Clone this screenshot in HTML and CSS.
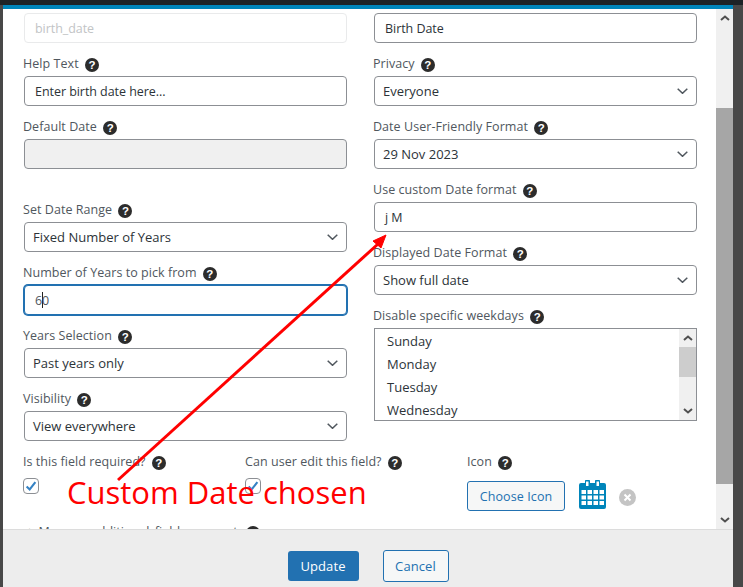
FILE: index.html
```html
<!DOCTYPE html>
<html lang="en">
<head>
<meta charset="utf-8">
<title>Edit field</title>
<link rel="stylesheet" href="styles.css">
</head>
<body>
<div class="topbar"></div>
<div class="stage">
  <div class="modal">
    <div class="modal-strip"></div>
    <div class="modal-body">
      <div class="scroll-content">
        <div class="columns">
          <div class="col">
            <div class="field">
              <div class="control disabled-light">birth_date</div>
            </div>
            <div class="field">
              <div class="label">Help Text <span class="help">?</span></div>
              <div class="control">Enter birth date here...</div>
            </div>
            <div class="field field-gap">
              <div class="label">Default Date <span class="help">?</span></div>
              <div class="control disabled"></div>
            </div>
            <div class="field">
              <div class="label">Set Date Range <span class="help">?</span></div>
              <div class="control select">Fixed Number of Years<svg class="chev" viewBox="0 0 11 6"><path d="M.7.7 5.500 5.300 10.300.7"/></svg></div>
            </div>
            <div class="field">
              <div class="label">Number of Years to pick from <span class="help">?</span></div>
              <div class="control focused">6<span class="caret"></span>0</div>
            </div>
            <div class="field">
              <div class="label">Years Selection <span class="help">?</span></div>
              <div class="control select">Past years only<svg class="chev" viewBox="0 0 11 6"><path d="M.7.7 5.500 5.300 10.300.7"/></svg></div>
            </div>
            <div class="field">
              <div class="label">Visibility <span class="help">?</span></div>
              <div class="control select">View everywhere<svg class="chev" viewBox="0 0 11 6"><path d="M.7.7 5.500 5.300 10.300.7"/></svg></div>
            </div>
          </div>
          <div class="col">
            <div class="field">
              <div class="control">Birth Date</div>
            </div>
            <div class="field">
              <div class="label">Privacy <span class="help">?</span></div>
              <div class="control select">Everyone<svg class="chev" viewBox="0 0 11 6"><path d="M.7.7 5.500 5.300 10.300.7"/></svg></div>
            </div>
            <div class="field">
              <div class="label">Date User-Friendly Format <span class="help">?</span></div>
              <div class="control select">29 Nov 2023<svg class="chev" viewBox="0 0 11 6"><path d="M.7.7 5.500 5.300 10.300.7"/></svg></div>
            </div>
            <div class="field">
              <div class="label">Use custom Date format <span class="help">?</span></div>
              <div class="control">j M</div>
            </div>
            <div class="field">
              <div class="label">Displayed Date Format <span class="help">?</span></div>
              <div class="control select">Show full date<svg class="chev" viewBox="0 0 11 6"><path d="M.7.7 5.500 5.300 10.300.7"/></svg></div>
            </div>
            <div class="field">
              <div class="label">Disable specific weekdays <span class="help">?</span></div>
              <div class="listbox">
                <div class="options">
                  <div class="option">Sunday</div>
                  <div class="option">Monday</div>
                  <div class="option">Tuesday</div>
                  <div class="option">Wednesday</div>
                </div>
                <div class="mini-scroll">
                  <svg class="arrow" viewBox="0 0 10 6"><path d="M1 5 5 1.500 9 5"/></svg>
                  <div class="mini-thumb"></div>
                  <svg class="arrow arrow-end" viewBox="0 0 10 6"><path d="M1 1 5 4.500 9 1"/></svg>
                </div>
              </div>
            </div>
          </div>
        </div>
        <div class="options-row">
          <div class="opt opt-required">
            <div class="label">Is this field required? <span class="help">?</span></div>
            <span class="check"><svg viewBox="0 0 16 16"><path d="M3 8.500 6.500 12 13 3.500"/></svg></span>
          </div>
          <div class="opt opt-edit">
            <div class="label">Can user edit this field? <span class="help">?</span></div>
            <span class="check"><svg viewBox="0 0 16 16"><path d="M3 8.500 6.500 12 13 3.500"/></svg></span>
          </div>
          <div class="opt">
            <div class="label">Icon <span class="help">?</span></div>
            <div class="icon-row">
              <div class="btn btn-sec btn-icon">Choose Icon</div>
              <svg class="cal" viewBox="0 0 27 29">
                <path fill="#0085ba" d="M2 3h4V1.500a2.500 2.500 0 0 1 5 0V3h5V1.500a2.500 2.500 0 0 1 5 0V3h4a2 2 0 0 1 2 2v22a2 2 0 0 1-2 2H2a2 2 0 0 1-2-2V5a2 2 0 0 1 2-2z"/>
                <path fill="#fff" d="M7 1.500h2.500V6H7zM17.500 1.500H20V6h-2.500zM2.500 10h4.500v4H2.500zM8.500 10h4.500v4H8.500zM14.500 10H19v4h-4.500zM20.500 10H25v4h-4.500zM2.500 15.500h4.500v4H2.500zM8.500 15.500h4.500v4H8.500zM14.500 15.500H19v4h-4.500zM20.500 15.500H25v4h-4.500zM2.500 21h4.500v4H2.500zM8.500 21h4.500v4H8.500zM14.500 21H19v4h-4.500zM20.500 21H25v4h-4.500z"/>
              </svg>
              <svg class="clear" viewBox="0 0 17 17"><circle cx="8.500" cy="8.500" r="8.500" fill="#c4c4c4"/><path d="M5.500 5.500l6 6m0-6-6 6" stroke="#fff" stroke-width="2" fill="none"/></svg>
            </div>
          </div>
        </div>
        <div class="label label-more">+ Manage additional fields support <span class="help">?</span></div>
      </div>
      <div class="scrollbar">
        <svg class="arrow" viewBox="0 0 10 6"><path d="M1 5 5 1.500 9 5"/></svg>
        <div class="thumb"></div>
        <svg class="arrow arrow-end" viewBox="0 0 10 6"><path d="M1 1 5 4.500 9 1"/></svg>
      </div>
    </div>
    <div class="modal-footer">
      <div class="btn btn-primary">Update</div>
      <div class="btn btn-sec btn-cancel">Cancel</div>
    </div>
  </div>
</div>
<svg class="annotation" viewBox="0 0 743 587">
  <path d="M118 480 378 244" stroke="#ff0000" stroke-width="3" fill="none"/>
  <path d="M386 235 373 241 381 248z" fill="#ff0000" stroke="#ff0000" stroke-width="1"/>
</svg>
<div class="annotation-text">Custom Date chosen</div>
</body>
</html>
```
FILE: styles.css
```css
* { box-sizing: border-box; }
html, body { margin: 0; height: 100%; }
body {
  width: 743px;
  height: 587px;
  overflow: hidden;
  background: #484848;
  font-family: "Open Sans", "Noto Sans", sans-serif;
  font-size: 13px;
  color: #2c3338;
  display: flex;
  flex-direction: column;
}
.topbar { height: 5px; background: #1d2327; flex: none; }
.stage { flex: 1; padding: 0 10px 0 3px; min-height: 0; display: flex; }
.modal { flex: 1; display: flex; flex-direction: column; background: #fff; min-width: 0; }
.modal-strip { height: 4px; background: #0085ba; flex: none; }
.modal-body { height: 520px; flex: none; display: flex; overflow: hidden; }
.scroll-content { flex: 1; overflow: hidden; padding: 4px 19px 0 21px; }
.columns { display: flex; gap: 27px; }
.col { width: 323px; flex: none; }
.field { margin-bottom: 10px; }
.field-gap { margin-bottom: 30px; }
.label {
  height: 20px;
  margin: 0 0 3px -1px;
  padding-top: 1px;
  line-height: 20px;
  font-size: 12.5px;
  color: #50575e;
  letter-spacing: 0.05px;
  white-space: nowrap;
}
.help {
  display: inline-block;
  width: 14px;
  height: 14px;
  margin-left: 3px;
  border-radius: 50%;
  background: #2c2c2c;
  color: #fff;
  font-family: "Liberation Sans", sans-serif;
  font-size: 11.5px;
  font-weight: 700;
  line-height: 14px;
  text-align: center;
  letter-spacing: 0;
  vertical-align: -1px;
}
.control {
  position: relative;
  height: 30px;
  padding: 0 10px;
  border: 1px solid #8c8f94;
  border-radius: 4px;
  background: #fff;
  line-height: 30px;
  font-size: 12.5px;
  letter-spacing: -0.05px;
  color: #2c3338;
}
.select {
  display: flex;
  align-items: center;
  justify-content: space-between;
  padding: 0 8px;
  font-size: 13px;
  letter-spacing: 0;
}
.chev { width: 11px; height: 6px; fill: none; stroke: #50575e; stroke-width: 1.5; flex: none; }
.disabled-light { border-color: #e9eaeb; color: #c2c4c6; }
.disabled { background: #f0f0f0; }
.focused {
  border-color: #2271b1;
  box-shadow: 0 0 0 1px #2271b1;
  color: #50575e;
}
.caret { display: inline-block; width: 1px; height: 16px; background: #222; vertical-align: -3px; margin-right: -1px; }
.listbox {
  height: 93px;
  display: flex;
  border: 1px solid #8c8f94;
  overflow: hidden;
}
.options { flex: 1; padding: 1px 12px 0; }
.option { height: 23px; line-height: 23px; color: #2c3338; letter-spacing: 0; }
.mini-scroll { width: 17px; flex: none; background: #f0f0f0; display: flex; flex-direction: column; align-items: center; }
.mini-thumb { width: 17px; height: 30px; background: #cdcdcd; }
.arrow { width: 10px; height: 6px; fill: none; stroke: #505050; stroke-width: 2; flex: none; margin: 6px 0; }
.mini-scroll .arrow-end { margin-top: auto; }
.options-row { display: flex; }
.opt-required { width: 222px; }
.opt-edit { width: 222px; }
.check {
  display: block;
  width: 16px;
  height: 16px;
  margin: 7px 0 0 -1px;
  border: 1px solid #8c8f94;
  border-radius: 4px;
  background: #fff;
}
.check svg { display: block; width: 14px; height: 14px; fill: none; stroke: #3582c4; stroke-width: 2.4; }
.icon-row { display: flex; align-items: flex-start; margin: 10px 0 0 -1px; }
.btn {
  display: flex;
  align-items: center;
  justify-content: center;
  border-radius: 3px;
  font-size: 13px;
  letter-spacing: 0.1px;
  flex: none;
}
.btn-sec { background: #f6f7f7; border: 1px solid #2271b1; color: #2271b1; }
.btn-icon { width: 98px; height: 30px; font-size: 12.5px; }
.cal { width: 27px; height: 29px; margin: -1px 0 0 14px; flex: none; }
.clear { width: 17px; height: 17px; margin: 8px 0 0 13px; flex: none; }
.label-more { margin: 10px 0 0 2px; word-spacing: 2px; }
.scrollbar { width: 17px; flex: none; background: #f0f0f0; display: flex; flex-direction: column; align-items: center; }
.thumb { width: 17px; height: 376px; margin-top: 87px; background: #a6a6a6; }
.scrollbar .arrow { margin-top: 6px; margin-bottom: 6px; }
.scrollbar .thumb + .arrow { margin-top: auto; }
.scrollbar > .arrow:first-child { margin-bottom: 0; }
.modal-footer {
  flex: 1;
  display: flex;
  justify-content: center;
  align-items: center;
  gap: 24px;
  padding-top: 15px;
  background: #ededed;
  border-top: 1px solid #dcdcdc;
}
.btn-primary { width: 71px; height: 30px; background: #2271b1; color: #fff; }
.btn-cancel { width: 66px; height: 32px; }
.annotation { position: absolute; left: 0; top: 0; width: 743px; height: 587px; pointer-events: none; }
.annotation-text {
  position: absolute;
  left: 67px;
  top: 471px;
  font-family: "Open Sans", sans-serif;
  font-size: 31px;
  line-height: 42px;
  color: #ff0000;
  white-space: nowrap;
}
```
